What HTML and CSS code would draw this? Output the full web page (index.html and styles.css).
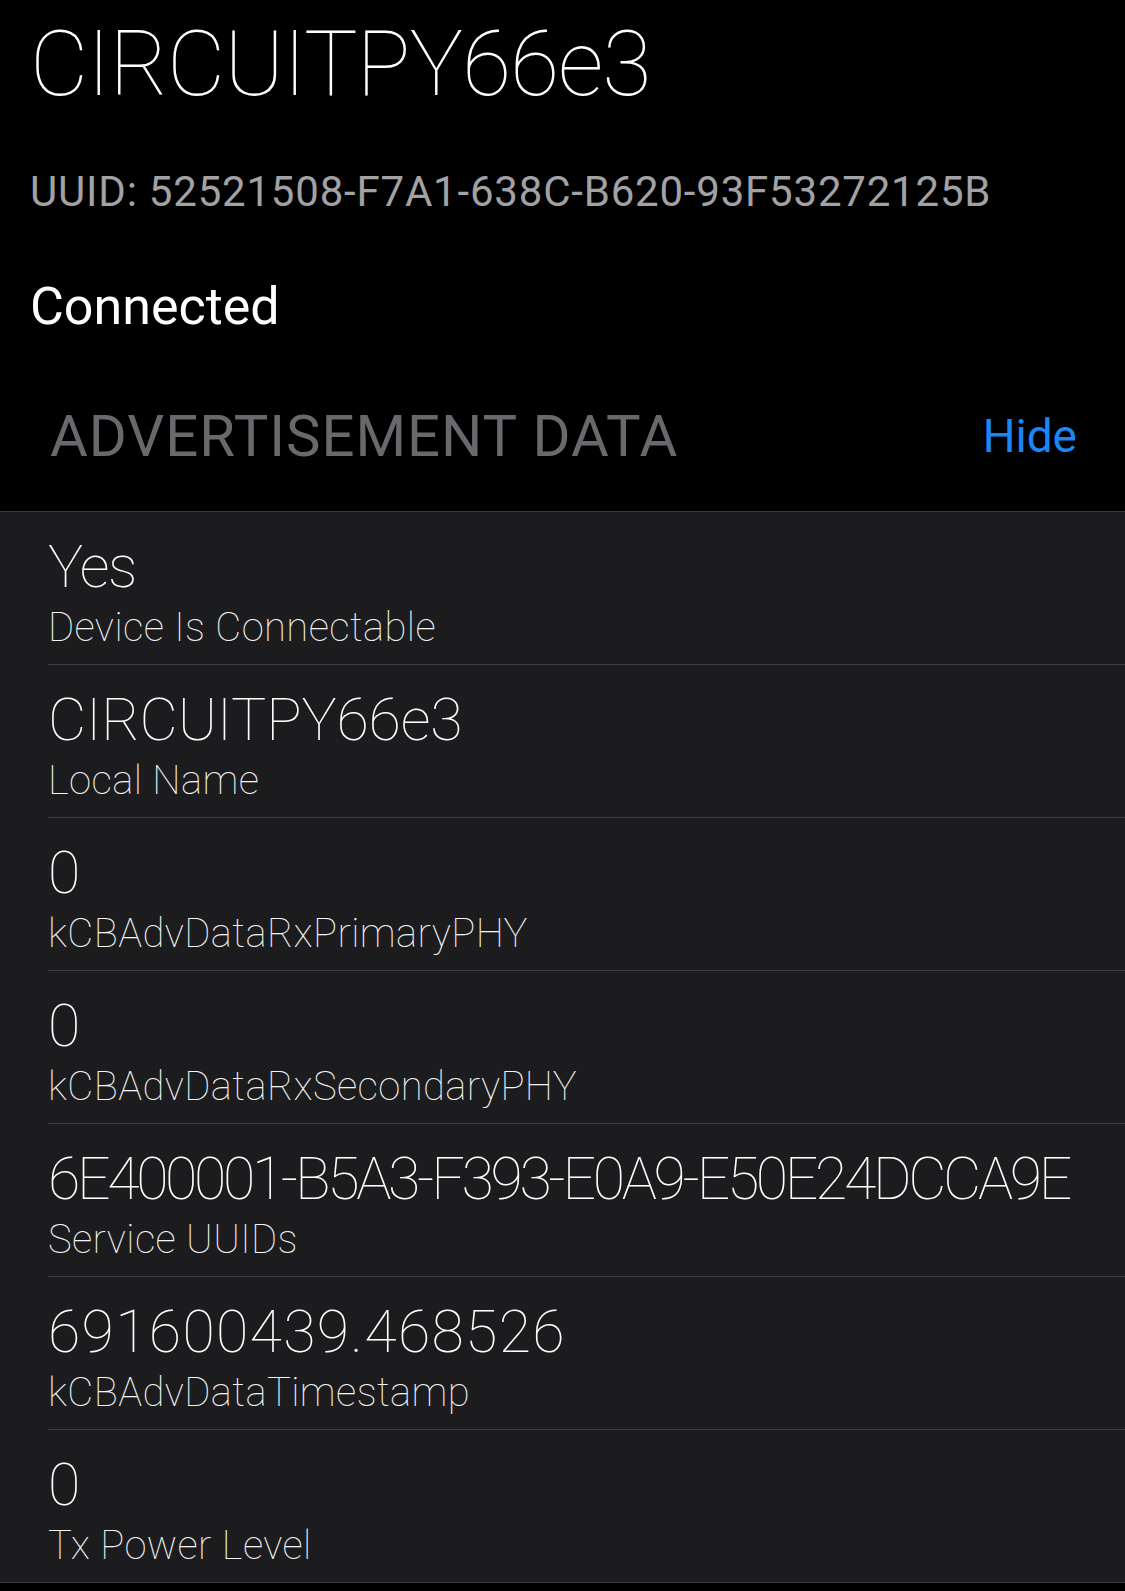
FILE: index.html
```html
<!DOCTYPE html>
<html lang="en">
<head>
<meta charset="utf-8">
<title>CIRCUITPY66e3</title>
<link rel="stylesheet" href="styles.css">
</head>
<body>
<div class="screen">
  <header class="device">
    <h1 class="device-name">CIRCUITPY66e3</h1>
    <div class="device-uuid">UUID: 52521508-F7A1-638C-B620-93F53272125B</div>
    <div class="device-state">Connected</div>
    <div class="section-head">
      <span class="section-title">ADVERTISEMENT DATA</span>
      <span class="section-action">Hide</span>
    </div>
  </header>
  <ul class="adv-list">
    <li class="adv-row"><div class="adv-value adv-bool">Yes</div><div class="adv-label">Device Is Connectable</div></li>
    <li class="adv-row"><div class="adv-value adv-name">CIRCUITPY66e3</div><div class="adv-label">Local Name</div></li>
    <li class="adv-row"><div class="adv-value">0</div><div class="adv-label">kCBAdvDataRxPrimaryPHY</div></li>
    <li class="adv-row"><div class="adv-value">0</div><div class="adv-label">kCBAdvDataRxSecondaryPHY</div></li>
    <li class="adv-row"><div class="adv-value adv-uuid">6E400001-B5A3-F393-E0A9-E50E24DCCA9E</div><div class="adv-label">Service UUIDs</div></li>
    <li class="adv-row"><div class="adv-value">691600439.468526</div><div class="adv-label">kCBAdvDataTimestamp</div></li>
    <li class="adv-row adv-row-last"><div class="adv-value">0</div><div class="adv-label">Tx Power Level</div></li>
  </ul>
</div>
</body>
</html>
```
FILE: styles.css
```css
html, body {
  margin: 0;
  padding: 0;
  background: #000;
}
body {
  font-family: "Roboto", "Liberation Sans", sans-serif;
  color: #fff;
  width: 1125px;
  height: 1591px;
  overflow: hidden;
}
.screen {
  display: flex;
  flex-direction: column;
}
.device {
  background: #000;
  padding: 15px 0 0 30px;
  border-bottom: 1px solid #3a3a3c;
}
.device-name {
  margin: 0;
  font-size: 90px;
  font-weight: 100;
  line-height: 100px;
  letter-spacing: -1.2px;
  color: #fff;
}
.device-uuid {
  margin-top: 52px;
  font-size: 42px;
  line-height: 50px;
  font-weight: 400;
  letter-spacing: 0.8px;
  color: #a2a2a4;
}
.device-state {
  margin-top: 60px;
  font-size: 52px;
  line-height: 60px;
  font-weight: 400;
  color: #fff;
}
.section-head {
  margin-top: 66px;
  margin-left: 20px;
  padding: 0 48px 42px 0;
  display: flex;
  justify-content: space-between;
  align-items: center;
}
.section-title {
  font-size: 58px;
  line-height: 66px;
  font-weight: 400;
  letter-spacing: 1px;
  color: #69696d;
}
.section-action {
  font-size: 46px;
  line-height: 66px;
  font-weight: 400;
  color: #1b86f6;
}
.adv-list {
  list-style: none;
  margin: 0;
  padding: 0;
  background: #1c1c1e;
  border-bottom: 1px solid #3d3d40;
}
.adv-row {
  margin-left: 48px;
  padding: 23px 0 12px 0;
  border-bottom: 1px solid #3d3d40;
}
.adv-row-last {
  border-bottom: none;
}
.adv-value {
  font-size: 59px;
  line-height: 64px;
  font-weight: 100;
  letter-spacing: 1.3px;
  color: #fff;
}
.adv-bool {
  letter-spacing: -1.5px;
}
.adv-name {
  letter-spacing: -0.2px;
}
.adv-uuid {
  letter-spacing: -3.35px;
}
.adv-label {
  margin-top: 5px;
  font-size: 40px;
  line-height: 48px;
  font-weight: 100;
  letter-spacing: 0.4px;
  color: #f4f4f4;
}
```
